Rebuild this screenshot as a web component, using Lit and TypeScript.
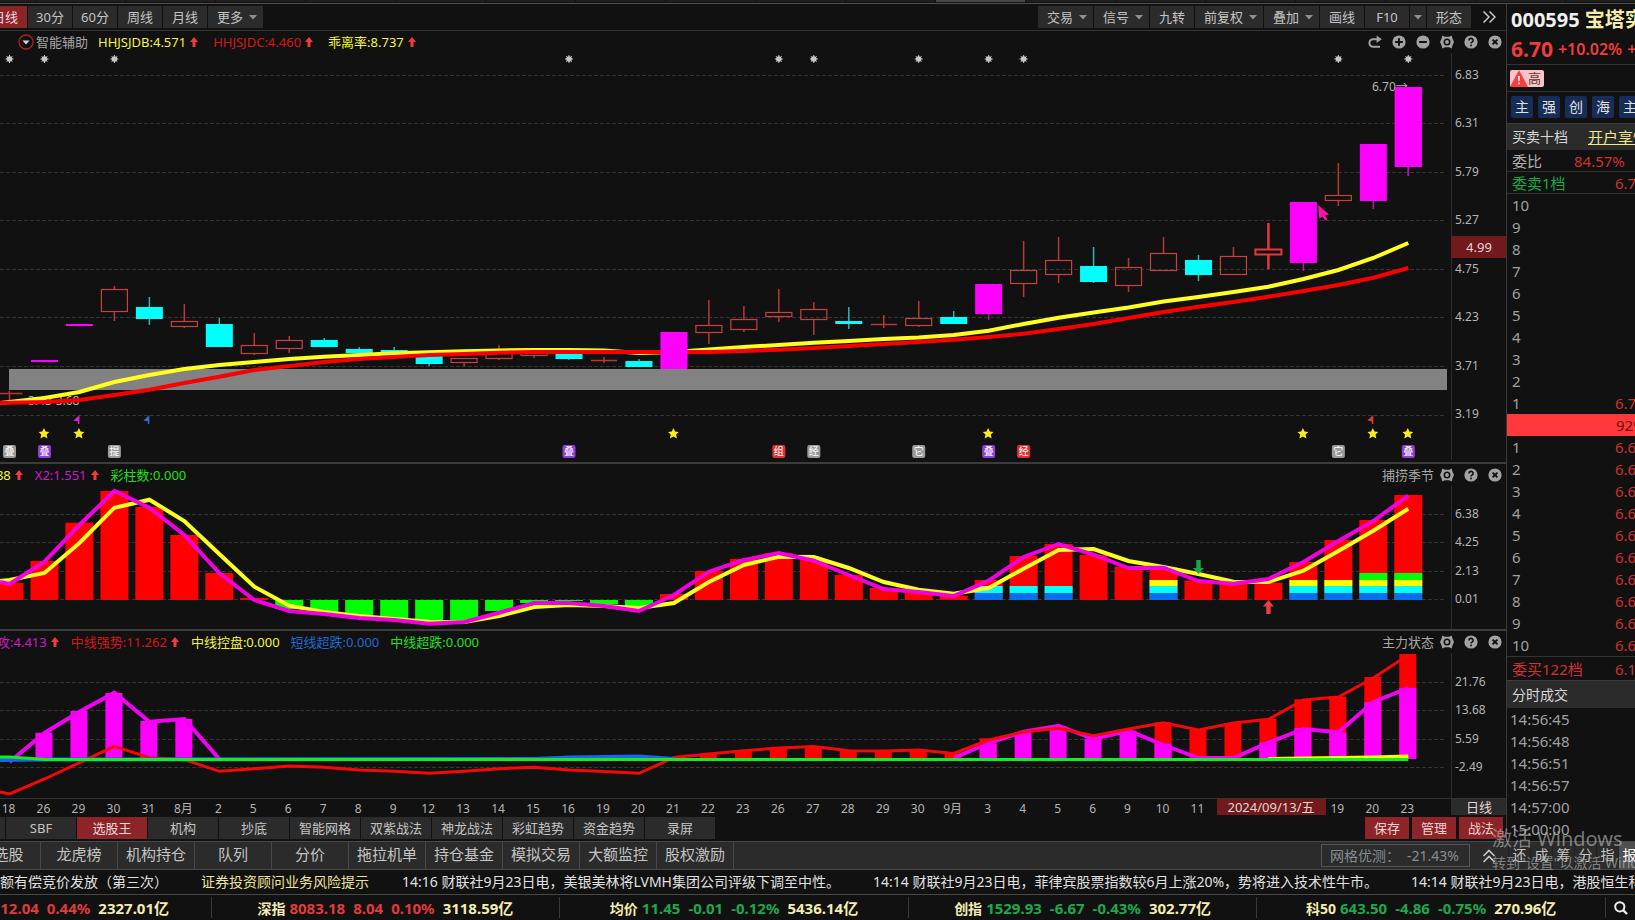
import { LitElement, html, svg, css, nothing } from "lit";
import { customElement, property } from "lit/decorators.js";

const SLOT = 34.97;
const cx = (i: number) => 9.5 + SLOT * i;

type Kind = "up" | "dn" | "lim" | "sel";
/* kind, high, body top, body bottom, low */
const CANDLES: [Kind, number, number, number, number][] = [
  ["up", 391, 393, 393, 400], ["lim", 360, 360, 362, 362], ["lim", 324, 324, 326, 326],
  ["up", 286, 289, 311, 321], ["dn", 297, 307, 319, 325], ["up", 304, 321, 326, 328],
  ["dn", 318, 324, 347, 347], ["up", 333, 345, 353, 355], ["up", 336, 340, 348, 353],
  ["dn", 338, 340, 347, 347], ["dn", 347, 349, 353, 353], ["dn", 347, 350, 352, 352],
  ["dn", 356, 356, 364, 366], ["up", 358, 358, 362, 366], ["up", 345, 350, 358, 360],
  ["up", 350, 350, 355, 358], ["dn", 353, 353, 359, 360], ["up", 357, 360, 360, 363],
  ["dn", 359, 361, 367, 367], ["lim", 332, 332, 369, 369], ["up", 300, 325, 332, 344],
  ["up", 306, 319, 329, 332], ["up", 289, 312, 316, 322], ["up", 302, 309, 319, 335],
  ["dn", 307, 321, 324, 329], ["up", 315, 324, 324, 328], ["up", 301, 318, 325, 327],
  ["dn", 311, 317, 324, 324], ["lim", 284, 284, 314, 320], ["up", 241, 270, 283, 297],
  ["up", 237, 260, 274, 283], ["dn", 247, 266, 282, 283], ["up", 258, 267, 285, 292],
  ["up", 237, 253, 270, 271], ["dn", 255, 260, 275, 281], ["up", 247, 256, 274, 275],
  ["sel", 223, 249, 254, 269], ["lim", 202, 202, 263, 271], ["up", 163, 195, 200, 206],
  ["lim", 144, 144, 201, 209], ["lim", 87, 87, 167, 176],
];
const MA_FAST = [402, 398, 392, 382, 375, 369, 365, 362, 359, 356.7, 355, 353.3, 352.3, 351.3, 350.5, 350, 350, 350.5, 353, 352, 349.5, 347, 345, 342.7, 341, 339, 337.5, 335, 330.7, 324, 317.7, 312.5, 307.5, 301.5, 297, 292, 286.7, 279, 270, 258, 243];
const MA_SLOW = [402.7, 402, 400, 395, 389.7, 383, 376.7, 370, 366, 362, 359, 357, 355, 354, 352.7, 352, 352, 352, 352, 352, 352, 351, 349.7, 348, 346, 344, 342, 339.7, 337, 333.7, 329, 324, 318, 312, 306.7, 302, 296.7, 291, 285, 277.7, 268];

const SEASON_BARS = [583, 561, 522.7, 491, 507, 535, 573, 598, 609, 614, 616, 618, 620, 620, 611, 603, 601, 604, 606, 594, 571, 559, 553, 560, 575, 588, 592, 595.7, 580, 556, 544, 555, 567, 567, 580.7, 583, 582.7, 562, 540, 520, 495];
const SEASON_Y = [580, 573, 543, 507.7, 499.7, 521, 554, 586.7, 605.7, 612, 616, 619, 621.7, 622, 616, 607, 605, 606, 608, 603, 582, 565, 556.7, 557, 568, 582, 589.7, 593.7, 588, 568.7, 550, 549, 561, 567, 574, 581.7, 582, 570.7, 551, 530.7, 508.7];
const SEASON_M = [584, 561.7, 525, 491, 507.7, 535, 573, 600, 611, 614, 618, 620, 623.7, 622, 612.7, 603, 603, 606, 611, 595, 571.7, 560, 553, 560.7, 575, 589, 592, 596, 580.7, 557, 544, 554.7, 568, 567.7, 581, 583.7, 579, 562, 541, 521, 495.7];
const STACKS: Record<number, number> = { 28: 2, 29: 2, 30: 2, 33: 3, 37: 3, 38: 3, 39: 4, 40: 4 };

const FORCE_M: Record<number, number> = { 1: 732.7, 2: 711, 3: 693, 4: 721, 5: 719, 28: 744, 29: 732, 30: 726, 31: 739, 32: 730.7, 33: 743.7, 36: 742.7, 37: 728, 38: 732.3, 39: 702, 40: 688 };
const FORCE_R: Record<number, number> = { 20: 754, 21: 750.7, 22: 748.3, 23: 746, 24: 751, 25: 751.3, 26: 750.3, 27: 753.7, 28: 738.3, 33: 722.3, 34: 730, 35: 723, 36: 719, 37: 699.3, 38: 696.7, 39: 677, 40: 654 };
const FORCE_RL = [794, 779, 762.7, 746.3, 757.7, 759.5, 771.3, 768.7, 766, 767.3, 770, 771.3, 773.3, 771.3, 768.7, 767.3, 770, 771.5, 773.3, 757.5, 754, 750.7, 748, 746.5, 750.7, 751, 750, 753.5, 740, 732, 728.3, 735.7, 729, 722.7, 730, 723, 719.3, 700, 697, 678, 655];
const FORCE_ML1 = [762, 733, 711.7, 692.7, 721.7, 719, 759];
const FORCE_ML2 = [758, 743, 731.7, 725.7, 739, 730.7, 745, 758, 758, 742.7, 729, 732.3, 702, 688];

const DATES = ["18", "26", "29", "30", "31", "8月", "2", "5", "6", "7", "8", "9", "12", "13", "14", "15", "16", "19", "20", "21", "22", "23", "26", "27", "28", "29", "30", "9月", "3", "4", "5", "6", "9", "10", "11", "", "", "", "19", "20", "23"];

const pts = (ys: number[], from = 0) => ys.map((y, k) => `${cx(from + k).toFixed(1)},${y}`).join(" ");
const grid = (ys: number[]) => ys.map((y) => svg`<line class="grid" x1="0" x2="1446" y1=${y} y2=${y} />`);
const scale = (rows: [string, number][]) => rows.map(([t, y]) => svg`<text class="tick" x="1455" y=${y + 4}>${t}</text>`);

const ICONS: Record<string, unknown> = {
  redo: svg`<path d="M9.5 4.2H5.2a3.7 3.7 0 0 0 0 7.6H12" fill="none" stroke="#a2a2a2" stroke-width="2"/><path d="M8.6 0.4 13.8 4.2 8.6 8z" fill="#a2a2a2"/>`,
  plus: svg`<circle cx="7" cy="7" r="6.6" fill="#a2a2a2"/><path d="M3.2 7h7.6M7 3.2v7.6" stroke="#111" stroke-width="2"/>`,
  minus: svg`<circle cx="7" cy="7" r="6.6" fill="#a2a2a2"/><path d="M3.2 7h7.6" stroke="#111" stroke-width="2"/>`,
  gear: svg`<path d="M2.400 .4 4.800 1.800h4.400L11.600 .4l1 3.600L14 7l-1.400 3-1 3.600L9.200 12.200H4.800L2.400 13.600 1.400 10 0 7l1.400-3z" fill="#a2a2a2"/><circle cx="7" cy="7" r="3.500" fill="#111"/><circle cx="7" cy="7" r="1.900" fill="#a2a2a2"/>`,
  help: svg`<circle cx="7" cy="7" r="6.600" fill="#a2a2a2"/><path d="M4.900 5.400a2.100 2 0 1 1 3.100 1.700c-.7.4-1 .7-1 1.400" fill="none" stroke="#111" stroke-width="1.600"/><rect x="6.200" y="9.600" width="1.700" height="1.700" fill="#111"/>`,
  close: svg`<circle cx="7" cy="7" r="6.600" fill="#a2a2a2"/><path d="M4.600 4.600l4.800 4.800M9.400 4.600 4.600 9.400" stroke="#111" stroke-width="2"/>`,
};
const NAMES: Record<string, string> = { redo: "恢复", plus: "放大", minus: "缩小", gear: "设置", help: "帮助", close: "关闭" };

const shared = css`
  * { box-sizing: border-box; }
  button { font: inherit; color: inherit; background: none; border: 0; padding: 0; margin: 0; white-space: nowrap; cursor: pointer; }
  svg { display: block; }
`;

@customElement("pane-head")
class PaneHead extends LitElement {
  @property() title = "";
  @property({ attribute: false }) items: [string, string, boolean][] = [];
  @property({ attribute: false }) icons: string[] = ["gear", "help", "close"];
  static styles = [shared, css`
    :host { display: flex; justify-content: space-between; align-items: center; height: 22px; font-size: 13px; line-height: 22px; padding-right: 4px; overflow: hidden; }
    .left { display: flex; align-items: center; white-space: nowrap; margin-left: var(--shift, 0); }
    .item { display: flex; align-items: center; gap: 4px; margin-right: var(--gap, 15px); }
    .item.flat { margin-right: 11px; }
    .right { display: flex; align-items: center; gap: 10px; color: #a8a8a8; }
    .name { margin-right: -4px; }
    .yellow { color: #f4f43c; } .red { color: #d81616; } .magenta { color: #d414d4; }
    .green { color: #1ee01e; } .blue { color: #1c6cd8; }
  `];
  render() {
    return html`<div class="left"><slot></slot>
      ${this.items.map(([t, c, up]) => html`<span class="item ${c} ${up ? "" : "flat"}">${t}${up ? html`<svg width="8" height="10" viewBox="0 0 8 10"><path d="M4 0 8 5H5.500v5h-3V5H0z" fill="#f43a3a"/></svg>` : nothing}</span>`)}</div>
      <div class="right">${this.title ? html`<span class="name">${this.title}</span>` : nothing}
      ${this.icons.map((n) => html`<button aria-label=${NAMES[n]}><svg width="14" height="14" viewBox="0 0 14 14">${ICONS[n]}</svg></button>`)}</div>`;
  }
}

const chartCss = css`
  .chart { width: 100%; height: auto; font-family: "Noto Sans", "Noto Sans CJK SC", sans-serif; }
  .grid { stroke: #353535; stroke-width: 1; stroke-dasharray: 4 2; }
  .axis { stroke: #2c2c2c; }
  .tick { fill: #b4b4b4; font-size: 12px; }
  .mid { text-anchor: middle; }
  .line { fill: none; stroke-width: 4; }
  .note { fill: #b4b4b4; font-size: 12px; }
  .hot { fill: #e6d4d4; font-size: 13px; text-anchor: middle; }
  .badge { fill: #fff; font-size: 10px; text-anchor: middle; }
`;

@customElement("price-chart")
class PriceChart extends LitElement {
  static styles = [shared, chartCss, css`:host { display: block; }`];
  candle([k, hi, t, b, lo]: [Kind, number, number, number, number], i: number) {
    const x = cx(i);
    const col = { up: "#b83838", dn: "#28b8b0", lim: "#b414b4", sel: "#e83838" }[k];
    const w = k === "sel" ? 2.5 : 1.5;
    const body = t === b
      ? svg`<line x1=${x - 13} x2=${x + 13} y1=${t + 0.5} y2=${t + 0.5} stroke=${col} stroke-width="1.500"/>`
      : k === "dn" || k === "lim"
        ? svg`<rect x=${x - 13.5} y=${t} width="27" height=${b - t} fill=${k === "dn" ? "#00ffff" : "#ff00ff"}/>`
        : svg`<rect x=${x - 13} y=${t + 0.5} width="26" height=${b - t} fill="none" stroke=${k === "sel" ? col : "#c84040"} stroke-width=${k === "sel" ? 2 : 1.2}/>`;
    return svg`<path d="M${x} ${hi}V${t}M${x} ${b}V${lo}" stroke=${col} stroke-width=${w}/>${body}`;
  }
  render() {
    const badges: [number, string, string][] = [[0, "叠", "#9a9a9a"], [1, "叠", "#9040d0"], [3, "提", "#9a9a9a"], [16, "叠", "#9040d0"], [22, "组", "#e03030"], [23, "经", "#9a9a9a"], [26, "它", "#9a9a9a"], [28, "叠", "#9040d0"], [29, "经", "#e03030"], [38, "它", "#9a9a9a"], [40, "叠", "#9040d0"]];
    const flags: [number, string][] = [[2, "#d028d0"], [4, "#3868d0"], [39, "#e03838"]];
    return html`<svg class="chart" viewBox="0 53 1506 409">
      ${grid([75.5, 123.5, 172.5, 220.5, 269.5, 317.5, 366.5, 415.5])}
      <line class="axis" x1="1451.500" x2="1451.500" y1="53" y2="460"/>
      <text class="note" x="28" y="405">3.43-3.68</text>
      <rect x="9" y="369" width="1438" height="21" fill="#828282"/>
      ${CANDLES.map((c, i) => (i === 19 ? nothing : this.candle(c, i)))}
      <polyline class="line" stroke="#ffff20" points="0,403 ${pts(MA_FAST)}"/>
      <polyline class="line" stroke="#fa0000" points="0,403 ${pts(MA_SLOW)}"/>
      ${this.candle(CANDLES[19], 19)}
      ${[0, 1, 3, 16, 22, 23, 26, 28, 29, 38, 40].map((i) => svg`<g transform="translate(${cx(i)} 59)"><circle r="2.800" fill="#c8c8c8"/><path d="M-4 0H4M0-4V4M-2.800-2.800 2.800 2.800M2.800-2.800-2.800 2.800" stroke="#c8c8c8"/></g>`)}
      ${[1, 2, 19, 28, 37, 39, 40].map((i) => svg`<path transform="translate(${cx(i) - 0.5} 433.500)" d="M0-5.500 1.700-1.900 5.400-1.500 2.700 1.100 3.500 5 0 3.100-3.500 5-2.700 1.100-5.400-1.500-1.700-1.900z" fill="#f8ec20"/>`)}
      ${badges.map(([i, t, c]) => svg`<rect x=${cx(i) - 6.5} y="445" width="13" height="13" rx="2" fill=${c}/><text class="badge" x=${cx(i)} y="455">${t}</text>`)}
      ${flags.map(([i, c]) => svg`<path transform="translate(${cx(i)} 415)" d="M0 0V9H-1.500V6.500L-6 5.500z" fill=${c}/>`)}
      <text class="note" x="1372" y="91">6.70→</text>
      ${this.candle(CANDLES[40], 40)}
      <path d="M1318 205 1329 214.500 1325 215.200 1327.500 219.500 1325 220.500 1322.500 216.500 1319.500 219z" fill="#ff10a8"/>
      ${scale([["6.83", 75], ["6.31", 123], ["5.79", 172], ["5.27", 220], ["4.75", 269], ["4.23", 317], ["3.71", 366], ["3.19", 414]])}
      <rect x="1451" y="236" width="55" height="22" fill="#701a1c"/>
      <text class="hot" x="1479" y="252">4.99</text>
    </svg>`;
  }
}

@customElement("season-chart")
class SeasonChart extends LitElement {
  static styles = [shared, chartCss, css`:host { display: block; }`];
  render() {
    const cols = ["#0870f0", "#00ffff", "#ffff00", "#00ff00"];
    const edge = [600, 593, 586, 580, 573];
    return html`<svg class="chart" viewBox="0 486 1506 143">
      ${grid([514.5, 542.5, 571.5, 599.5])}
      <line class="axis" x1="1451.500" x2="1451.500" y1="486" y2="629"/>
      ${SEASON_BARS.map((y, i) => svg`<rect x=${cx(i) - 14} width="28" y=${Math.min(y, 600)} height=${Math.abs(600 - y)} fill=${y > 600 ? "#00ff00" : "#ff0000"}/>`)}
      ${Object.entries(STACKS).map(([i, n]) => cols.slice(0, n).map((c, k) => svg`<rect x=${cx(+i) - 14} width="28" y=${edge[k + 1]} height=${edge[k] - edge[k + 1]} fill=${c}/>`))}
      <polyline class="line" stroke="#ffff20" points="0,581 ${pts(SEASON_Y)}"/>
      <polyline class="line" stroke="#f200e0" points="0,582 ${pts(SEASON_M)}"/>
      <path transform="translate(${cx(34)} 574)" d="M0 0-5.500-6H-2.200V-14H2.200V-6H5.500z" fill="#14a850"/>
      <path transform="translate(${cx(36)} 600)" d="M0 0 5.500 6.500H2.200V14H-2.200V6.500H-5.500z" fill="#f03c3c"/>
      ${scale([["6.38", 514], ["4.25", 542], ["2.13", 571], ["0.01", 599]])}
    </svg>`;
  }
}

@customElement("force-chart")
class ForceChart extends LitElement {
  static styles = [shared, chartCss, css`:host { display: block; }`];
  render() {
    const bars = (m: Record<number, number>, c: string) => Object.entries(m).map(([i, y]) => svg`<rect x=${cx(+i) - 9} width="17" y=${y} height=${759 - y} fill=${c}/>`);
    return html`<svg class="chart" viewBox="0 653 1506 163">
      ${grid([682.5, 710.5, 739.5, 767.5])}
      <line class="axis" x1="1451.500" x2="1451.500" y1="653" y2="798"/>
      ${bars(FORCE_R, "#ff0000")}${bars(FORCE_M, "#ff00ff")}
      <polyline class="line" stroke="#f400f4" points=${pts(FORCE_ML1)}/>
      <polyline class="line" stroke="#f400f4" points=${pts(FORCE_ML2, 27)}/>
      <polyline fill="none" stroke-width="3" stroke="#f60808" points="0,792 ${pts(FORCE_RL)}"/>
      <polyline class="line" stroke="#1c64e8" points="0,760 45,759.500 ${pts([759, 757.5, 757, 756.5, 759], 15)}"/>
      <polyline class="line" stroke="#ffff00" points=${pts([759, 758.5, 758, 757.5, 756.5], 36)}/>
      <polyline fill="none" stroke-width="3" stroke="#10f018" points="0,757 10,757 45,759.500 ${cx(40)},759.500"/>
      <rect x="0" y="798" width="1506" height="1" fill="#333"/>
      ${scale([["21.76", 682], ["13.68", 710], ["5.59", 739], ["-2.49", 767]])}
      ${DATES.map((d, i) => (d ? svg`<text class="tick mid" x=${cx(i) - 1} y="813">${d}</text>` : nothing))}
      <rect x="1217" y="799" width="109" height="16" fill="#701a1c"/>
      <text class="hot" x="1271" y="812">2024/09/13/五</text>
      <rect x="1451" y="799" width="55" height="16" fill="#2b2b2b"/>
      <text class="hot" x="1479" y="812">日线</text>
    </svg>`;
  }
}

@customElement("quote-panel")
class QuotePanel extends LitElement {
  static styles = [shared, css`
    :host { display: block; border-left: 1px solid #3a3a3a; overflow: hidden; white-space: nowrap; font-size: 15px; color: #b0b0b0; }
    .title { display: flex; align-items: center; gap: 5px; height: 32px; padding-left: 4px; font-size: 20px; font-weight: 700; line-height: 32px; color: #f0f0f0; }
    .title em { font-style: normal; color: #f4eca8; }
    .price { display: flex; align-items: center; gap: 5px; height: 28px; padding-left: 4px; font-size: 16px; font-weight: 600; line-height: 24px; color: #f03c3c; }
    .price b { font-size: 21px; font-weight: 700; }
    .price span, .price b { padding-bottom: 2px; }
    .risk { display: flex; align-items: center; height: 27px; padding-left: 3px; border-top: 1px solid #333; }
    .risk span { display: flex; align-items: center; height: 17px; padding-right: 3px; border-radius: 2px; background: #f8c4c8; color: #5c3434; font-size: 13px; line-height: 17px; }
    .tags { display: flex; gap: 5px; height: 32px; padding: 4px 0 0 4px; border-top: 1px solid #333; }
    .tags button { flex: none; width: 22px; height: 22px; border-radius: 2px; background: #182c58; color: #e0e0e0; font-size: 14px; line-height: 22px; }
    .bar { display: flex; align-items: center; justify-content: flex-start; gap: 20px; height: 27px; padding-left: 5px; background: #2b2b2b; border-top: 1px solid #3c3c3c; color: #d8d8d8; font-size: 14px; line-height: 26px; }
    .bar.deals { height: 28px; }
    .bar a { color: #f0e890; font-size: 15px; }
    table { border-collapse: separate; border-spacing: 0; table-layout: fixed; width: 160px; }
    td { height: 22px; padding: 0 0 0 5px; line-height: 20px; }
    td.l { width: 104px; } td.t { width: 124px; padding-left: 3px; }
    .v { color: #d03030; padding-left: 4px; }
    .cap td { border-bottom: 1px solid #333; }
    .ratio td.l { width: 63px; }
    .sell .l { color: #18a850; } .buy .l { color: #d03030; }
    .hit td { background: #ff383c; color: #701010; }
    .buy td { height: 24px; border-top: 1px solid #333; border-bottom: 0; }
    .num { color: #a0a0a0; }
  `];
  row(n: number, v: string) { return html`<tr class="num"><td class="l">${n}</td><td class="v">${v}</td></tr>`; }
  render() {
    const down = [10, 9, 8, 7, 6, 5, 4, 3, 2, 1];
    return html`
      <div class="title">000595<em>宝塔实业</em></div>
      <div class="price"><b>6.70</b><span>+10.02%</span><span>+0.61</span></div>
      <div class="risk"><span><svg width="18" height="17" viewBox="0 0 18 17"><path d="M9 0 18 17H0z" fill="#f83c40"/><path d="M8 6h2l-.4 5H8.400zM8.200 12.500h1.700v1.700H8.200z" fill="#fff"/></svg>高</span></div>
      <div class="tags">${["主", "强", "创", "海", "主"].map((t) => html`<button>${t}</button>`)}</div>
      <div class="bar">买卖十档<a href="#">开户享惊喜</a></div>
      <table><tr class="cap ratio"><td class="l">委比</td><td class="v">84.57%</td></tr></table>
      <table>
        <tr class="cap sell"><td class="l">委卖1档</td><td class="v">6.70</td></tr>
        ${down.map((n) => this.row(n, n === 1 ? "6.70" : ""))}
        <tr class="hit"><td class="l"></td><td>92%</td></tr>
        ${down.slice().reverse().map((n) => this.row(n, "6.69"))}
        <tr class="cap buy"><td class="l">委买122档</td><td class="v">6.12</td></tr>
      </table>
      <div class="bar deals">分时成交</div>
      <table>${["14:56:45", "14:56:48", "14:56:51", "14:56:57", "14:57:00", "15:00:00"].map((t) => html`<tr class="num"><td class="t">${t}</td><td class="v">6.70</td></tr>`)}</table>`;
  }
}

@customElement("app-root")
class AppRoot extends LitElement {
  static styles = [shared, css`
    :host { display: block; position: relative; overflow: hidden; background: #111; color: #c4c4c4; font-family: "Noto Sans", "Noto Sans CJK SC", sans-serif; font-size: 13px; }
    .strip { display: flex; height: 4px; margin-left: -54px; border-bottom: 1px solid #505050; overflow: hidden; }
    .strip i { flex: none; width: 89px; height: 2px; margin-right: 1px; background: #1e1e1e; }
    .strip i.on { background: #484848; }
    .body { display: grid; grid-template-columns: minmax(0, 1fr) 129px; }
    .bar { display: flex; gap: 1px; height: 27px; padding-top: 2px; border-bottom: 1px solid #333; }
    .bar button { display: flex; align-items: center; justify-content: center; gap: 6px; height: 22px; min-width: 44px; padding: 0 8px; background: #2b2b2b; line-height: 22px; }
    .bar .drop { padding: 0 6px 0 9px; }
    .bar .on { background: #8c2428; color: #f0d8d8; margin-left: -17px; }
    .bar .tiny { min-width: 16px; padding: 0 3px; }
    .bar .more { background: none; width: 34px; min-width: 34px; }
    .push { flex: 1; }
    .switch { display: flex; align-items: center; color: #a8a8a8; margin-right: 10px; padding-left: 18px; gap: 2px; }
    .pane { border-bottom: 2px solid #3c3c3c; }
    .pane.last { border-bottom: 0; }
    .season { --shift: -41px; --gap: 12px; }
    .force { --shift: -42px; --gap: 12px; }
    .tabs { display: flex; gap: 1px; height: 25px; padding-top: 1px; overflow: hidden; }
    .tabs button { flex: none; width: 70px; height: 22px; background: #2b2b2b; line-height: 22px; text-align: center; }
    .tabs .stub { width: 5px; }
    .tabs .on { background: #8c2428; color: #f0d8d8; }
    .acts { display: flex; gap: 3px; margin-right: 3px; }
    .tabs .acts button { width: 44px; background: #8c2428; color: #f0d0d0; }
    .funcs { display: flex; align-items: center; height: 29px; background: #2b2b2b; border-top: 1px solid #484848; border-bottom: 1px solid #484848; overflow: hidden; font-size: 15px; line-height: 24px; }
    .funcs .f { flex: none; width: 77px; height: 27px; padding-bottom: 3px; border-right: 1px solid #484848; }
    .funcs .first { width: 64px; margin-left: -23px; }
    .opt { display: flex; align-items: center; width: 149px; height: 23px; border: 1px solid #555; color: #888c94; font-size: 14px; line-height: 20px; padding-left: 8px; justify-content: space-between; padding-right: 10px; white-space: nowrap; }
    .up { width: 38px; display: flex; justify-content: center; }
    .minis { display: flex; width: 127px; overflow: hidden; }
    .minis button { flex: none; width: 22px; height: 27px; padding-bottom: 2px; font-size: 14px; line-height: 25px; border-left: 1px solid #222; }
    .minis .on { background: #505050; color: #fff; }
    .news { display: flex; height: 25px; overflow: hidden; white-space: nowrap; font-size: 14px; line-height: 24px; color: #e0e0e0; border-bottom: 1px solid #484848; }
    .news span { flex: none; margin-right: 33px; }
    .news .head { display: flex; justify-content: flex-end; width: 168px; }
    .news .warn { color: #ece49c; }
    .idx { display: flex; height: 25px; overflow: hidden; font-size: 15px; font-weight: 700; line-height: 23px; white-space: nowrap; }
    .cells { display: flex; flex: 1; margin-left: -137px; }
    .cell { flex: 1; display: flex; justify-content: center; gap: 8px; margin: 2px 0; border-right: 1px solid #3a3a3a; color: #f4ecb0; }
    .cell .n { font-size: 14px; margin-right: -4px; }
    .r { color: #e03c3c; } .g { color: #1ca84c; }
    .find { width: 29px; display: flex; align-items: center; justify-content: center; }
    .mark { position: absolute; right: 0; bottom: 47px; width: 143px; overflow: hidden; white-space: nowrap; color: rgba(190, 190, 190, .6); font-size: 14px; line-height: 20px; pointer-events: none; }
    .mark p { margin: 0; }
    .mark .big { font-size: 20px; line-height: 28px; }
  `];
  caret = svg`<path d="M0 0H8L4 4.500z" fill="#909090"/>`;
  btn(t: string, drop = false, cls = "") {
    return html`<button class="${drop ? "drop" : ""} ${cls}" aria-label=${t || "展开"}>${t}${drop ? html`<svg width="8" height="5" viewBox="0 0 8 5">${this.caret}</svg>` : nothing}</button>`;
  }
  render() {
    const cells: [string, string, string, string, string, string][] = [
      ["上证", "2748.92", "12.04", "0.44%", "2327.01亿", "r"],
      ["深指", "8083.18", "8.04", "0.10%", "3118.59亿", "r"],
      ["均价", "11.45", "-0.01", "-0.12%", "5436.14亿", "g"],
      ["创指", "1529.93", "-6.67", "-0.43%", "302.77亿", "g"],
      ["科50", "643.50", "-4.86", "-0.75%", "270.96亿", "g"],
    ];
    return html`
      <div class="strip">${Array.from({ length: 20 }, (_, i) => html`<i class=${i === 11 ? "on" : ""}></i>`)}</div>
      <div class="body">
        <main>
          <nav class="bar">
            ${this.btn("日线", false, "on")}${this.btn("30分")}${this.btn("60分")}${this.btn("周线")}${this.btn("月线")}${this.btn("更多", true)}
            <span class="push"></span>
            ${this.btn("交易", true)}${this.btn("信号", true)}${this.btn("九转")}${this.btn("前复权", true)}${this.btn("叠加", true)}${this.btn("画线")}${this.btn("F10")}${this.btn("", true, "tiny")}${this.btn("形态")}
            <button class="more" aria-label="更多工具"><svg width="14" height="14" viewBox="0 0 14 14"><path d="M1.500 1.500 7 7 1.500 12.500M7.500 1.500 13 7 7.500 12.500" fill="none" stroke="#c8c8c8" stroke-width="1.500"/></svg></button>
          </nav>
          <section class="pane">
            <pane-head .items=${[["HHJSJDB:4.571", "yellow", true], ["HHJSJDC:4.460", "red", true], ["乖离率:8.737", "yellow", true]]} .icons=${["redo", "plus", "minus", "gear", "help", "close"]}>
              <button class="switch"><svg width="16" height="16" viewBox="0 0 16 16"><circle cx="8" cy="8" r="7" fill="none" stroke="#b02020" stroke-width="1.300"/><path d="M4.500 6.500h7L8 10.500z" fill="#d8d8d8"/></svg>智能辅助</button>
            </pane-head>
            <price-chart></price-chart>
          </section>
          <section class="pane">
            <pane-head class="season" title="捕捞季节" .items=${[["X1:1.388", "yellow", true], ["X2:1.551", "magenta", true], ["彩柱数:0.000", "green", false]]}></pane-head>
            <season-chart></season-chart>
          </section>
          <section class="pane last">
            <pane-head class="force" title="主力状态" .items=${[["短线进攻:4.413", "magenta", true], ["中线强势:11.262", "red", true], ["中线控盘:0.000", "yellow", false], ["短线超跌:0.000", "blue", false], ["中线超跌:0.000", "green", false]]}></pane-head>
            <force-chart></force-chart>
          </section>
          <nav class="tabs">
            <button class="stub" aria-label="上一组"></button>
            ${["SBF", "选股王", "机构", "抄底", "智能网格", "双紫战法", "神龙战法", "彩虹趋势", "资金趋势", "录屏"].map((t) => html`<button class=${t === "选股王" ? "on" : ""}>${t}</button>`)}
            <span class="push"></span>
            <div class="acts"><button>保存</button><button>管理</button><button>战法</button></div>
          </nav>
        </main>
        <quote-panel></quote-panel>
      </div>
      <nav class="funcs">
        ${["选股", "龙虎榜", "机构持仓", "队列", "分价", "拖拉机单", "持仓基金", "模拟交易", "大额监控", "股权激励"].map((t, i) => html`<button class="f ${i ? "" : "first"}">${t}</button>`)}
        <span class="push"></span>
        <div class="opt"><span>网格优测：</span><span>-21.43%</span></div>
        <button class="up" aria-label="展开"><svg width="14" height="14" viewBox="0 0 14 14"><path d="M1.500 7 7 1.500 12.500 7M1.500 13 7 7.500 12.500 13" fill="none" stroke="#c8c8c8" stroke-width="1.600"/></svg></button>
        <div class="minis">${["还", "成", "筹", "分", "指", "报"].map((t) => html`<button class=${t === "报" ? "on" : ""}>${t}</button>`)}</div>
      </nav>
      <div class="news">
        <span class="head">关于余额有偿竞价发放（第三次）</span>
        <span class="warn">证券投资顾问业务风险提示</span>
        <span>14:16 财联社9月23日电，美银美林将LVMH集团公司评级下调至中性。</span>
        <span>14:14 财联社9月23日电，菲律宾股票指数较6月上涨20%，势将进入技术性牛市。</span>
        <span>14:14 财联社9月23日电，港股恒生科技指数</span>
      </div>
      <footer class="idx">
        <div class="cells">${cells.map(([n, p, d, r, v, c]) => html`<div class="cell"><span class="n">${n}</span><span class=${c}>${p}</span><span class=${c}>${d}</span><span class=${c}>${r}</span><span>${v}</span></div>`)}</div>
        <button class="find" aria-label="搜索"><svg width="14" height="14" viewBox="0 0 14 14"><circle cx="5.800" cy="5.800" r="4.600" fill="none" stroke="#f0f0f0" stroke-width="2"/><path d="M9 9l4 4" stroke="#f0f0f0" stroke-width="2.400"/></svg></button>
      </footer>
      <div class="mark"><p class="big">激活 Windows</p><p>转到"设置"以激活 Windows</p></div>`;
  }
}
